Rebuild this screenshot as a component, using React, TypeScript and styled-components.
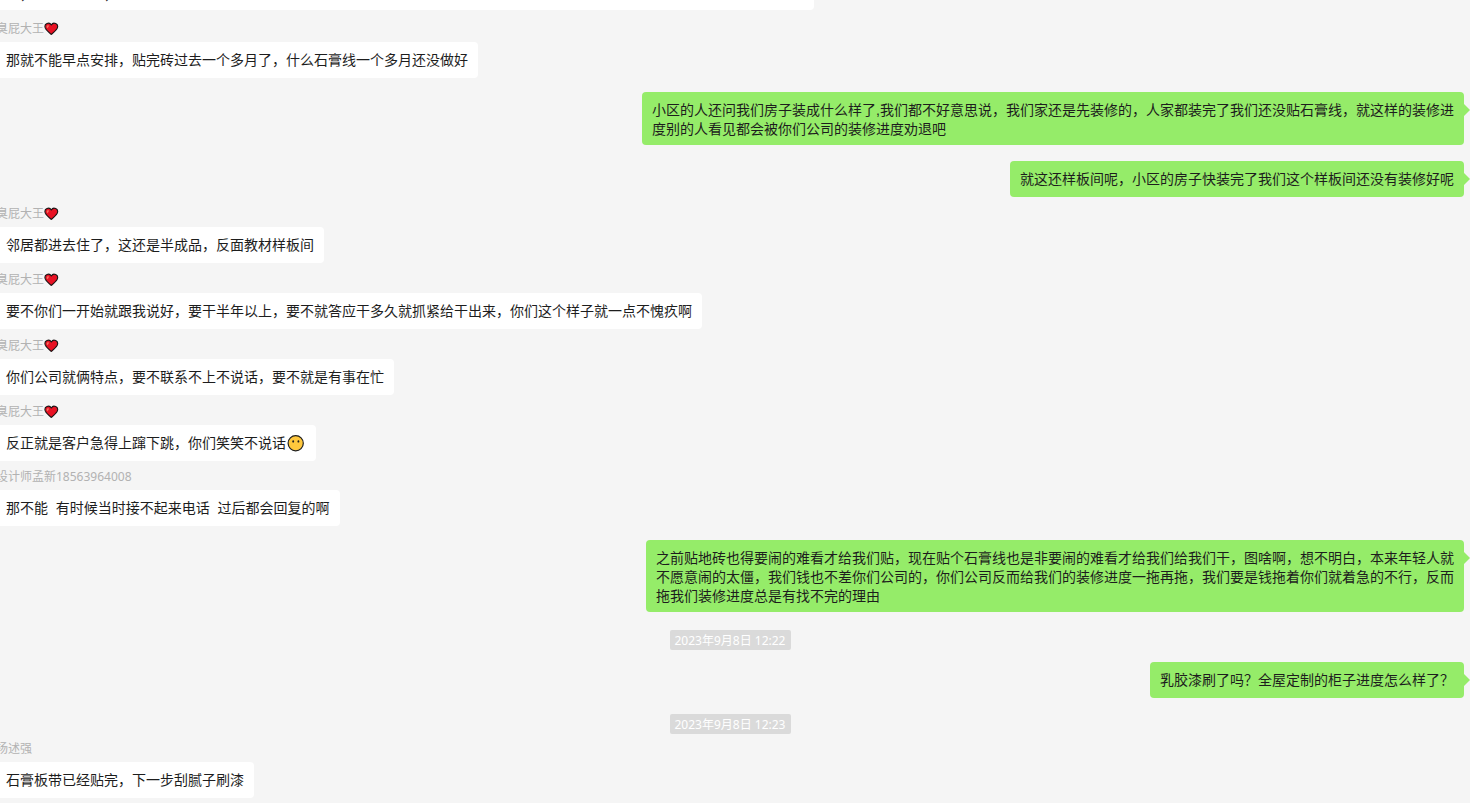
import React from "react";
import styled, { createGlobalStyle } from "styled-components";

const GlobalStyle = createGlobalStyle`
  *, *::before, *::after { box-sizing: border-box; }
  body {
    margin: 0;
    background: #f5f5f5;
    color: #1d1d1d;
    font-family: "Noto Sans", "Noto Sans CJK SC", sans-serif;
  }
`;

const Pane = styled.main`
  height: 100vh;
  overflow: hidden;
  display: flex;
  flex-direction: column;
  justify-content: flex-end;
`;

const Thread = styled.ol`
  list-style: none;
  margin: 0 6px 0 -4px;
  padding: 0 0 3px;
  display: flex;
  flex-direction: column;
`;

const StampRow = styled.li`
  display: flex;
  justify-content: center;
  padding-top: 14px;
`;

const Stamp = styled.time`
  height: 20px;
  min-width: 121px;
  padding: 0 4px;
  border-radius: 2px;
  background: #dadada;
  color: #ffffff;
  font-size: 12px;
  line-height: 22px;
  text-align: center;
  white-space: nowrap;
`;

const Row = styled.li<{ $mine?: boolean; $tall?: boolean }>`
  display: flex;
  flex-direction: column;
  align-items: ${(p) => (p.$mine ? "flex-end" : "flex-start")};
  padding: ${(p) => (p.$mine ? 12 : 0)}px 0 ${(p) => (p.$tall ? 4 : 2)}px;

  ${StampRow} + & {
    padding-top: ${(p) => (p.$mine ? 12 : 1)}px;
  }
`;

const Sender = styled.div<{ $icon?: boolean }>`
  display: flex;
  align-items: center;
  height: ${(p) => (p.$icon ? 28 : 27)}px;
  padding-top: ${(p) => (p.$icon ? 2 : 0)}px;
  color: #b2b2b2;
  font-size: 12px;
  line-height: 16px;
  white-space: nowrap;
`;

const Bubble = styled.p<{ $mine?: boolean }>`
  position: relative;
  margin: 0;
  min-height: 36px;
  max-width: 824px;
  padding: 9px 10px 6px;
  border-radius: 4px;
  background: ${(p) => (p.$mine ? "#95ec69" : "#ffffff")};
  font-family: "Liberation Sans", "Noto Sans CJK SC", sans-serif;
  font-size: 14px;
  line-height: 19px;
  white-space: pre-wrap;
  text-spacing-trim: space-all;
`;

const Tail = styled.span`
  position: absolute;
  top: 12px;
  left: 100%;
  border: solid transparent;
  border-width: 6px 0 6px 6px;
  border-left-color: #95ec69;
`;

const HeartIcon = styled.svg`
  display: block;
  width: 15px;
  height: 14px;
`;

const FaceIcon = styled.svg`
  display: inline-block;
  width: 20px;
  height: 18px;
  vertical-align: top;
`;

const Heart = () => (
  <HeartIcon viewBox="0 0 15 14" role="img" aria-label="红心">
    <path
      d="M7.3 3C6.3 1.2 4.3.9 2.9 1.6 1.2 2.4.6 4.5 1.4 6.3 2.4 8.4 5 10.5 7.3 12.4 9.6 10.5 12.2 8.4 13.2 6.3 14 4.5 13.4 2.4 11.7 1.6 10.3.9 8.3 1.2 7.3 3Z"
      fill="#e81224"
      stroke="#1b1414"
      strokeWidth="1.1"
      strokeLinejoin="round"
    />
    <path d="M2.8 5.2C2.6 3.8 3.4 3 4.6 3L4.8 4.2 3.6 6.2Z" fill="#f4705f" />
  </HeartIcon>
);

const Face = () => (
  <FaceIcon viewBox="0 0 20 18" role="img" aria-label="不说话">
    <circle cx="9.7" cy="9.2" r="7.6" fill="#ffc83d" stroke="#1f1f1f" strokeWidth="1.2" />
    <ellipse cx="7.2" cy="7.4" rx="0.9" ry="1.2" fill="#1f1f1f" />
    <ellipse cx="12.4" cy="7.4" rx="0.9" ry="1.2" fill="#1f1f1f" />
  </FaceIcon>
);

type Item =
  | { kind: "time"; text: string; iso: string }
  | { kind: "mine"; text: string }
  | { kind: "other"; name: string; heart?: boolean; text: string; face?: boolean };

const KING = { kind: "other" as const, name: "臭屁大王", heart: true };

const items: Item[] = [
  { ...KING, text: "\u3000".repeat(57) + "\n\u3000，\u3000\u3000\u3000\u3000\u3000，" },
  { ...KING, text: "那就不能早点安排，贴完砖过去一个多月了，什么石膏线一个多月还没做好" },
  {
    kind: "mine",
    text: "小区的人还问我们房子装成什么样了,我们都不好意思说，我们家还是先装修的，人家都装完了我们还没贴石膏线，就这样的装修进\n度别的人看见都会被你们公司的装修进度劝退吧",
  },
  { kind: "mine", text: "就这还样板间呢，小区的房子快装完了我们这个样板间还没有装修好呢" },
  { ...KING, text: "邻居都进去住了，这还是半成品，反面教材样板间" },
  {
    ...KING,
    text: "要不你们一开始就跟我说好，要干半年以上，要不就答应干多久就抓紧给干出来，你们这个样子就一点不愧疚啊",
  },
  { ...KING, text: "你们公司就俩特点，要不联系不上不说话，要不就是有事在忙" },
  { ...KING, text: "反正就是客户急得上蹿下跳，你们笑笑不说话", face: true },
  {
    kind: "other",
    name: "设计师孟新18563964008",
    text: "那不能  有时候当时接不起来电话  过后都会回复的啊",
  },
  {
    kind: "mine",
    text: "之前贴地砖也得要闹的难看才给我们贴，现在贴个石膏线也是非要闹的难看才给我们给我们干，图啥啊，想不明白，本来年轻人就\n不愿意闹的太僵，我们钱也不差你们公司的，你们公司反而给我们的装修进度一拖再拖，我们要是钱拖着你们就着急的不行，反而\n拖我们装修进度总是有找不完的理由",
  },
  { kind: "time", text: "2023年9月8日 12:22", iso: "2023-09-08T12:22" },
  { kind: "mine", text: "乳胶漆刷了吗？全屋定制的柜子进度怎么样了？" },
  { kind: "time", text: "2023年9月8日 12:23", iso: "2023-09-08T12:23" },
  { kind: "other", name: "杨述强", text: "石膏板带已经贴完，下一步刮腻子刷漆" },
];

const Message = ({ item }: { item: Item }) => {
  if (item.kind === "time") {
    return (
      <StampRow>
        <Stamp dateTime={item.iso}>{item.text}</Stamp>
      </StampRow>
    );
  }
  const tall = item.text.includes("\n");
  if (item.kind === "mine") {
    return (
      <Row $mine $tall={tall}>
        <Bubble $mine>
          {item.text}
          <Tail />
        </Bubble>
      </Row>
    );
  }
  return (
    <Row $tall={tall}>
      <Sender $icon={item.heart}>
        {item.name}
        {item.heart && <Heart />}
      </Sender>
      <Bubble>
        {item.text}
        {item.face && <Face />}
      </Bubble>
    </Row>
  );
};

export default function App() {
  return (
    <>
      <GlobalStyle />
      <Pane>
        <Thread>
          {items.map((item, i) => (
            <Message key={i} item={item} />
          ))}
        </Thread>
      </Pane>
    </>
  );
}
